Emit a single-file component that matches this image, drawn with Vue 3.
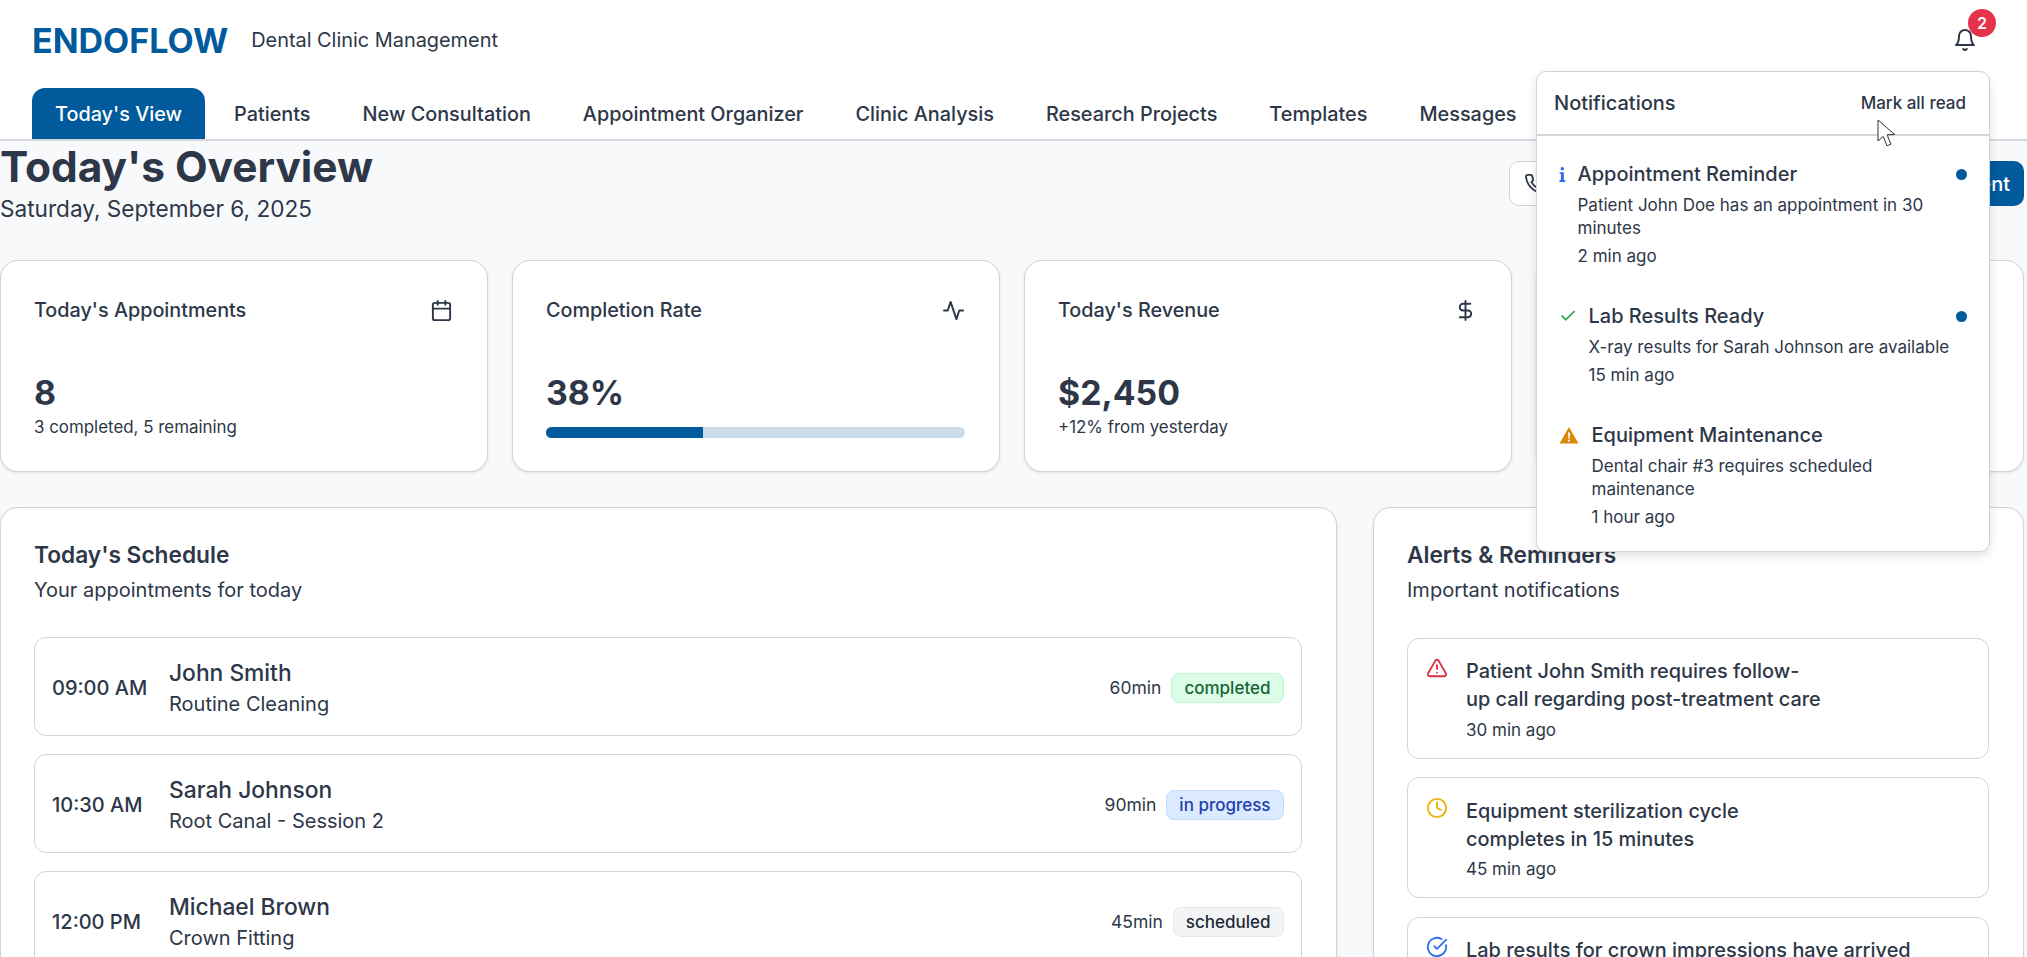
<script setup>
const tabs = ["Patients", "New Consultation", "Appointment Organizer", "Clinic Analysis", "Research Projects", "Templates", "Messages"];
const appts = [
  { time: "09:00 AM", name: "John Smith", kind: "Routine Cleaning", dur: "60min", status: "completed", cls: "done" },
  { time: "10:30 AM", name: "Sarah Johnson", kind: "Root Canal - Session 2", dur: "90min", status: "in progress", cls: "prog" },
  { time: "12:00 PM", name: "Michael Brown", kind: "Crown Fitting", dur: "45min", status: "scheduled", cls: "sched" },
];
</script>

<template>
  <div class="page">
    <header class="top">
      <div class="brand-row">
        <div class="brand">
          <span class="logo">ENDOFLOW</span>
          <span class="tagline">Dental Clinic Management</span>
        </div>
        <button class="bell" aria-label="Notifications">
          <svg width="24" height="24" viewBox="0 0 24 24" fill="none" stroke="#2d3748" stroke-width="2" stroke-linecap="round" stroke-linejoin="round"><path d="M6 8a6 6 0 0 1 12 0c0 7 3 9 3 9H3s3-2 3-9"/><path d="M10.3 21a1.94 1.94 0 0 0 3.4 0"/></svg>
          <span class="badge">2</span>
        </button>
      </div>
      <nav class="tabs">
        <span class="tab active">Today's View</span>
        <span v-for="t in tabs" :key="t" class="tab">{{ t }}</span>
      </nav>
    </header>

    <main class="main">
      <div class="title-row">
        <div>
          <h1>Today's Overview</h1>
          <p class="date">Saturday, September 6, 2025</p>
        </div>
        <div class="actions">
          <button class="btn-ghost">
            <svg width="22" height="22" viewBox="0 0 24 24" fill="none" stroke="#2d3748" stroke-width="2" stroke-linecap="round" stroke-linejoin="round"><path d="M22 16.92v3a2 2 0 0 1-2.18 2 19.79 19.79 0 0 1-8.63-3.07 19.5 19.5 0 0 1-6-6 19.79 19.79 0 0 1-3.07-8.67A2 2 0 0 1 4.11 2h3a2 2 0 0 1 2 1.72 12.84 12.84 0 0 0 .7 2.81 2 2 0 0 1-.45 2.11L8.09 9.91a16 16 0 0 0 6 6l1.27-1.27a2 2 0 0 1 2.11-.45 12.84 12.84 0 0 0 2.81.7A2 2 0 0 1 22 16.92z"/></svg>
          </button>
          <button class="btn-primary">New Appointment</button>
        </div>
      </div>

      <section class="stats">
        <div class="card stat">
          <div class="stat-head">
            <span>Today's Appointments</span>
            <svg width="23" height="23" viewBox="0 0 24 24" fill="none" stroke="#2d3748" stroke-width="2" stroke-linecap="round" stroke-linejoin="round"><path d="M8 2v4"/><path d="M16 2v4"/><rect x="3" y="4" width="18" height="18" rx="2"/><path d="M3 10h18"/></svg>
          </div>
          <div class="stat-value">8</div>
          <div class="stat-sub">3 completed, 5 remaining</div>
        </div>
        <div class="card stat">
          <div class="stat-head">
            <span>Completion Rate</span>
            <svg width="23" height="23" viewBox="0 0 24 24" fill="none" stroke="#2d3748" stroke-width="2" stroke-linecap="round" stroke-linejoin="round"><path d="M22 12h-4l-3 9L9 3l-3 9H2"/></svg>
          </div>
          <div class="stat-value">38%</div>
          <div class="progress"><div class="progress-fill" :style="{ width: '37.5%' }"></div></div>
        </div>
        <div class="card stat">
          <div class="stat-head">
            <span>Today's Revenue</span>
            <svg width="23" height="23" viewBox="0 0 24 24" fill="none" stroke="#2d3748" stroke-width="2" stroke-linecap="round" stroke-linejoin="round"><path d="M12 2v20"/><path d="M17 5H9.5a3.5 3.5 0 0 0 0 7h5a3.5 3.5 0 0 1 0 7H6"/></svg>
          </div>
          <div class="stat-value">$2,450</div>
          <div class="stat-sub">+12% from yesterday</div>
        </div>
        <div class="card stat"></div>
      </section>

      <section class="split">
        <div class="card panel">
          <h2>Today's Schedule</h2>
          <p class="panel-sub">Your appointments for today</p>
          <div class="list">
            <div v-for="a in appts" :key="a.name" class="appt">
              <span class="time">{{ a.time }}</span>
              <div class="who">
                <div class="name">{{ a.name }}</div>
                <div class="kind">{{ a.kind }}</div>
              </div>
              <span class="dur">{{ a.dur }}</span>
              <span class="pill" :class="a.cls">{{ a.status }}</span>
            </div>
          </div>
        </div>

        <div class="card panel">
          <h2>Alerts &amp; Reminders</h2>
          <p class="panel-sub">Important notifications</p>
          <div class="alerts">
            <div class="alert">
              <svg class="alert-icon" viewBox="0 0 24 24" fill="none" stroke="#dc2f3f" stroke-width="2" stroke-linecap="round" stroke-linejoin="round"><path d="m21.73 18-8-14a2 2 0 0 0-3.48 0l-8 14A2 2 0 0 0 4 21h16a2 2 0 0 0 1.73-3"/><path d="M12 9v4"/><path d="M12 17h.01"/></svg>
              <div>
                <p class="alert-text">Patient John Smith requires follow-<br>up call regarding post-treatment care</p>
                <p class="alert-time">30 min ago</p>
              </div>
            </div>
            <div class="alert">
              <svg class="alert-icon" viewBox="0 0 24 24" fill="none" stroke="#eab308" stroke-width="2" stroke-linecap="round" stroke-linejoin="round"><circle cx="12" cy="12" r="10"/><path d="M12 6v6l4 2"/></svg>
              <div>
                <p class="alert-text">Equipment sterilization cycle<br>completes in 15 minutes</p>
                <p class="alert-time">45 min ago</p>
              </div>
            </div>
            <div class="alert">
              <svg class="alert-icon" viewBox="0 0 24 24" fill="none" stroke="#2f6fed" stroke-width="2" stroke-linecap="round" stroke-linejoin="round"><path d="M21.8 10A10 10 0 1 1 17 3.34"/><path d="m9 11 3 3L22 4"/></svg>
              <div>
                <p class="alert-text">Lab results for crown impressions have arrived</p>
              </div>
            </div>
          </div>
        </div>
      </section>
    </main>

    <aside class="popup">
      <div class="popup-head">
        <span class="popup-title">Notifications</span>
        <span class="mark">Mark all read</span>
      </div>
      <div class="n-item first">
        <span class="n-icon info">
          <svg width="7" height="15" viewBox="0 0 7 15"><circle cx="3.3" cy="1.7" r="1.7" fill="#2f6bed"/><path d="M.6 5.2h4.2v7.9l1.6.4V15H.4v-1.5l1.5-.4V6.9L.6 6.5z" fill="#2f6bed"/></svg>
        </span>
        <div class="n-body">
          <div class="n-title">Appointment Reminder</div>
          <div class="n-desc">Patient John Doe has an appointment in 30 minutes</div>
          <div class="n-time">2 min ago</div>
        </div>
        <span class="dot"></span>
      </div>
      <div class="n-item">
        <span class="n-icon ok">
          <svg width="18" height="18" viewBox="0 0 24 24" fill="none" stroke="#16a34a" stroke-width="2.2" stroke-linecap="round" stroke-linejoin="round"><path d="M20 6 9 17l-5-5"/></svg>
        </span>
        <div class="n-body">
          <div class="n-title">Lab Results Ready</div>
          <div class="n-desc">X-ray results for Sarah Johnson are available</div>
          <div class="n-time">15 min ago</div>
        </div>
        <span class="dot"></span>
      </div>
      <div class="n-item">
        <span class="n-icon warn">
          <svg width="20" height="18" viewBox="0 0 20 18"><path d="M10 1 19.5 17.5H.5z" fill="#d98a0b"/><path d="M9 6.5h2l-.3 6h-1.4z" fill="#fff"/><circle cx="10" cy="14.6" r="1.1" fill="#fff"/></svg>
        </span>
        <div class="n-body">
          <div class="n-title">Equipment Maintenance</div>
          <div class="n-desc">Dental chair #3 requires scheduled maintenance</div>
          <div class="n-time">1 hour ago</div>
        </div>
      </div>
    </aside>

    <svg class="cursor" width="20" height="29" viewBox="0 0 20 29"><path d="M1 1v21l5.2-4.6 3.8 9.4 4-1.7-3.9-9.2 7.4-.5z" fill="#fff" stroke="#333" stroke-width="1"/></svg>
  </div>
</template>

<style>
html, body { margin: 0; background: #f8f9fb; }
</style>

<style scoped>
.page {
  position: relative;
  width: 2027px;
  height: 957px;
  overflow: hidden;
  background: #f8f9fb;
  color: #2d3748;
  font-family: Inter, "Noto Sans", sans-serif;
}
.top { background: #fff; border-bottom: 2px solid #d3d7de; height: 139px; }
.brand-row { display: flex; justify-content: space-between; align-items: center; height: 80px; padding: 0 50px 0 32px; }
.brand { display: flex; align-items: center; gap: 23px; }
.logo { font-size: 34px; font-weight: 700; color: #005a9c; }
.tagline { font-size: 19.9px; }
.bell { position: relative; width: 24px; height: 24px; padding: 0; border: 0; background: none; }
.badge {
  position: absolute; left: 15px; top: -19px; width: 28px; height: 28px; border-radius: 50%;
  background: #e5334a; color: #fff; font-size: 15.5px; font-weight: 600;
  display: flex; align-items: center; justify-content: center; font-family: Inter, sans-serif;
}
.tabs { display: flex; padding-left: 32px; margin-top: 8px; height: 51px; }
.tab { display: flex; align-items: center; padding: 0 26px; font-size: 19.85px; font-weight: 500; white-space: nowrap; }
.tab.active { padding: 0 23px; margin-right: 3px; background: #005a9c; color: #fff; border-radius: 13px 13px 0 0; }

.main { padding-right: 3px; }
.title-row { display: flex; justify-content: space-between; align-items: flex-start; margin-bottom: 36px; }
h1 { margin: 0; font-size: 42.4px; line-height: 52px; font-weight: 700; }
.date { margin: 1px 0 0; font-size: 22.6px; line-height: 30px; }
.actions { display: flex; gap: 10px; margin-top: 20px; }
.btn-ghost { width: 306px; height: 45px; box-sizing: border-box; background: #fff; border: 1.5px solid #cfd3da; border-radius: 10px; padding: 0 0 0 14px; display: flex; align-items: center; }
.btn-primary { height: 45px; padding: 0 14px; background: #005a9c; color: #fff; border: 0; border-radius: 10px; font: 500 19.9px Inter, sans-serif; }

.card { background: #fff; border: 1.5px solid #cfd3da; box-sizing: border-box; border-radius: 18px; box-shadow: 0 1px 3px rgba(0,0,0,.1); }
.stats { display: grid; grid-template-columns: repeat(4, 1fr); gap: 24px; margin-bottom: 35px; }
.stat { height: 212px; padding: 34px 34px 0 33px; }
.stat-head { display: flex; justify-content: space-between; align-items: center; font-size: 19.8px; font-weight: 500; height: 24px; margin-top: 3px; }
.stat-value { font-size: 33.8px; font-weight: 700; line-height: 44px; margin-top: 49px; }
.stat-sub { font-size: 16.9px; line-height: 24px; }
.progress { height: 11px; border-radius: 6px; background: #cbdcea; overflow: hidden; margin-top: 12px; }
.progress-fill { height: 100%; background: #005a9c; }

.split { display: grid; grid-template-columns: 1337px 1fr; gap: 36px; }
.panel { padding: 34px 34.5px 34px 33px; height: 600px; }
h2 { margin: 0; font-size: 22.7px; line-height: 26px; font-weight: 600; }
.panel-sub { margin: 9px 0 0; font-size: 20px; line-height: 26px; }
.list { display: flex; flex-direction: column; gap: 18px; margin-top: 34px; }
.appt { display: flex; align-items: center; height: 99px; box-sizing: border-box; border: 1.5px solid #cfd3da; border-radius: 12px; padding: 2px 17px 0; }
.time { width: 117px; flex: none; font-size: 20px; font-weight: 500; white-space: nowrap; }
.who { flex: 1; padding-top: 1px; }
.name { font-size: 22.8px; font-weight: 500; line-height: 30px; }
.kind { font-size: 20px; line-height: 30px; margin-top: 1px; }
.dur { font-size: 17.5px; margin-right: 10px; }
.pill { height: 30px; box-sizing: border-box; display: flex; align-items: center; padding: 0 12px; border-radius: 8px; font-size: 17px; font-weight: 500; border: 1.5px solid; }
.done { background: #dcfce7; color: #166534; border-color: #bbf7d0; }
.prog { background: #dbeafe; color: #1e40af; border-color: #bfdbfe; }
.sched { background: #f3f4f6; color: #1f2937; border-color: #e5e7eb; }

.alerts { display: flex; flex-direction: column; gap: 18.5px; margin-top: 34.5px; }
.alert { display: flex; gap: 18px; box-sizing: border-box; height: 121px; border: 1.5px solid #cfd3da; border-radius: 12px; padding: 18.5px 18px 0; }
.alert-icon { width: 22px; height: 22px; flex: none; }
.alert-text { margin: 0; font-size: 19.9px; line-height: 28px; font-weight: 500; }
.alert-time { margin: 4.5px 0 0; font-size: 17px; line-height: 24px; }

.popup {
  position: absolute; left: 1536px; top: 71px; width: 454px; height: 481px; box-sizing: border-box;
  background: #fff; border: 1.5px solid #cfd3da; border-radius: 10px; box-shadow: 0 4px 10px rgba(0,0,0,.12);
}
.popup-head { display: flex; justify-content: space-between; align-items: center; height: 64px; padding: 0 23px 0 17px; border-bottom: 2px solid #d3d7de; box-sizing: border-box; }
.popup-title { font-size: 20px; font-weight: 500; }
.mark { font-size: 17px; font-weight: 500; }
.n-item { display: flex; align-items: flex-start; padding: 18px 22px; }
.first { margin-top: 8px; }
.n-icon { flex: none; display: flex; align-items: center; height: 24px; }
.info { width: 18.5px; }
.ok { width: 29.5px; }
.warn { width: 32.5px; }
.n-body { flex: 1; }
.n-title { font-size: 20px; font-weight: 500; line-height: 24px; }
.n-desc { font-size: 17px; line-height: 23px; margin-top: 8px; }
.n-time { font-size: 17px; line-height: 24px; margin-top: 4px; }
.dot { flex: none; width: 11px; height: 11px; border-radius: 50%; background: #005a9c; margin-top: 7px; margin-left: 2px; }
.cursor { position: absolute; left: 1877px; top: 119px; }
</style>
